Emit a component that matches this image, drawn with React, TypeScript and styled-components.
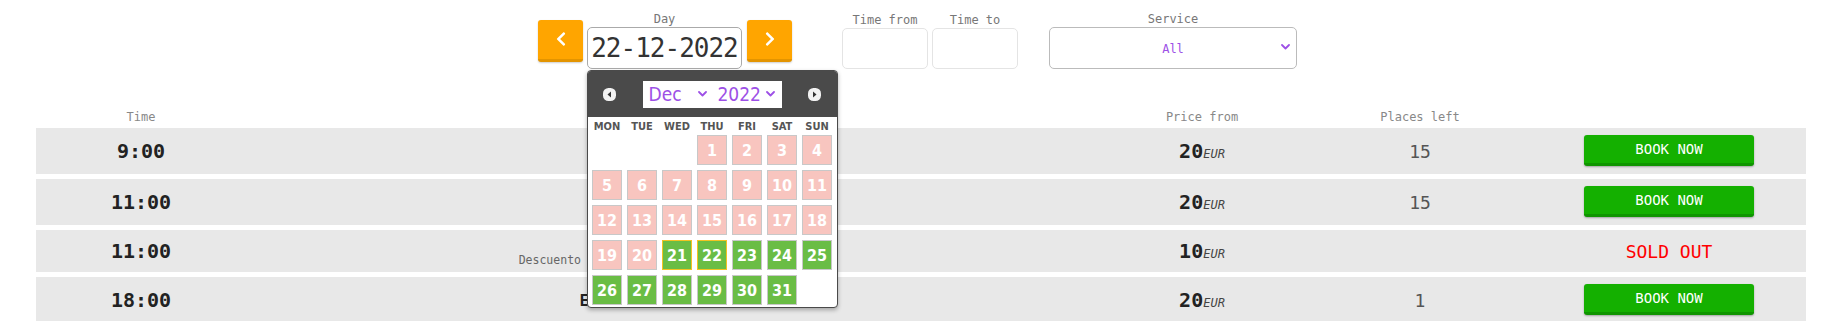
import React from 'react';
import styled, { createGlobalStyle } from 'styled-components';
import { FaChevronLeft, FaChevronRight } from 'react-icons/fa';

const GlobalStyle = createGlobalStyle`
  body {
    margin: 0;
    background: #fff;
    font-family: "DejaVu Sans Mono", "Liberation Mono", monospace;
  }
`;

const slots = [
  { time: '9:00', name: 'Paseo en barco', price: 20, places: '15' },
  { time: '11:00', name: 'Paseo en barco', price: 20, places: '15' },
  {
    time: '11:00',
    name: 'Paseo en barco',
    note: 'Descuento 50% residentes, niños y jubilados.',
    price: 10,
    places: '',
    soldOut: true,
  },
  { time: '18:00', name: 'Excursión en velero', price: 20, places: '1' },
];

const weekdays = ['MON', 'TUE', 'WED', 'THU', 'FRI', 'SAT', 'SUN'];
const days: (number | null)[] = [null, null, null, ...Array.from({ length: 31 }, (_, i) => i + 1)];

const Chevron = ({ color = '#9d50e6' }: { color?: string }) => (
  <svg width="9" height="6" viewBox="0 0 9 6">
    <polyline points="1,1 4.5,4.5 8,1" fill="none" stroke={color} strokeWidth="1.8" strokeLinecap="round" strokeLinejoin="round" />
  </svg>
);

const CalArrow = ({ dir }: { dir: 'left' | 'right' }) => (
  <svg width="13" height="13" viewBox="0 0 13 13">
    <rect x="0" y="0" width="13" height="13" rx="5.5" fill="#f2f2f2" />
    {dir === 'left' ? <polygon points="8,3.5 4.5,6.5 8,9.5" fill="#333" /> : <polygon points="5,3.5 8.5,6.5 5,9.5" fill="#333" />}
  </svg>
);

const App = () => {
  return (
    <Page>
      <GlobalStyle />
      <Toolbar>
        <NavButton style={{ marginRight: 4 }}>
          <FaChevronLeft size={16} />
        </NavButton>
        <Field>
          <Label>Day</Label>
          <DateBox>22-12-2022</DateBox>
          <Calendar>
            <CalHeader>
              <CalArrow dir="left" />
              <MonthBox>
                <MonthPart>
                  Dec <Chevron />
                </MonthPart>
                <YearPart>
                  2022 <Chevron />
                </YearPart>
              </MonthBox>
              <CalArrow dir="right" />
            </CalHeader>
            <WeekRow>
              {weekdays.map((w) => (
                <span key={w}>{w}</span>
              ))}
            </WeekRow>
            <DayGrid>
              {days.map((d, i) =>
                d === null ? (
                  <span key={`e${i}`} />
                ) : (
                  <DayCell key={d} $open={d >= 21} $marked={d === 21 || d === 22}>
                    {d}
                  </DayCell>
                )
              )}
            </DayGrid>
          </Calendar>
        </Field>
        <NavButton style={{ marginLeft: 5 }}>
          <FaChevronRight size={16} />
        </NavButton>
        <Field $gap={50}>
          <Label>Time from</Label>
          <TimeBox />
        </Field>
        <Field $gap={4}>
          <Label>Time to</Label>
          <TimeBox />
        </Field>
        <Field $gap={31}>
          <Label>Service</Label>
          <ServiceBox>
            All
            <SelectChevron>
              <Chevron />
            </SelectChevron>
          </ServiceBox>
        </Field>
      </Toolbar>

      <HeadRow>
        <span>Time</span>
        <span />
        <span>Price from</span>
        <span>Places left</span>
        <span />
      </HeadRow>

      <Rows>
        {slots.map((s, i) => (
          <Row key={i}>
            <TimeCell>{s.time}</TimeCell>
            <ServiceCell>
              <ServiceName>{s.name}</ServiceName>
              {s.note && <ServiceNote>{s.note}</ServiceNote>}
            </ServiceCell>
            <Price>
              {s.price}
              <em>EUR</em>
            </Price>
            <Places>{s.places}</Places>
            {s.soldOut ? <SoldOut>SOLD OUT</SoldOut> : <BookButton>BOOK NOW</BookButton>}
          </Row>
        ))}
      </Rows>
    </Page>
  );
};

const Page = styled.div`
  padding: 12px 32px 0 36px;
`;

const Toolbar = styled.div`
  display: flex;
  justify-content: center;
  align-items: center;
  padding-right: 7px;
`;

const Field = styled.div<{ $gap?: number }>`
  position: relative;
  display: flex;
  flex-direction: column;
  align-items: center;
  margin-left: ${(p) => p.$gap || 0}px;
`;

const Label = styled.div`
  font-size: 12px;
  line-height: 14px;
  color: #777;
  margin-bottom: 1px;
`;

const NavButton = styled.button`
  box-sizing: border-box;
  width: 45px;
  height: 42px;
  padding: 0;
  border: none;
  border-bottom: 3px solid #e39400;
  border-radius: 3px;
  background: #ffa500;
  color: #fff;
  display: flex;
  align-items: center;
  justify-content: center;
  box-shadow: 0 1px 2px rgba(0, 0, 0, 0.2);
`;

const DateBox = styled.div`
  box-sizing: border-box;
  width: 155px;
  height: 42px;
  border: 1px solid #aaa;
  border-radius: 5px;
  display: flex;
  align-items: center;
  justify-content: center;
  font-size: 26px;
  letter-spacing: -1px;
  color: #333;
`;

const TimeBox = styled.div`
  box-sizing: border-box;
  width: 86px;
  height: 41px;
  border: 1px solid #e4e4e4;
  border-radius: 5px;
`;

const ServiceBox = styled.div`
  box-sizing: border-box;
  position: relative;
  width: 248px;
  height: 42px;
  padding-top: 2px;
  border: 1px solid #bbb;
  border-radius: 5px;
  display: flex;
  align-items: center;
  justify-content: center;
  font-size: 12px;
  color: #9d50e6;
`;

const SelectChevron = styled.span`
  position: absolute;
  right: 6px;
  top: 16px;
  display: flex;
`;

const Calendar = styled.div`
  position: absolute;
  top: calc(100% + 1px);
  left: 0;
  z-index: 10;
  box-sizing: border-box;
  width: 251px;
  background: #fff;
  border: 1px solid #4a4a4a;
  border-radius: 4px;
  overflow: hidden;
  box-shadow: 0 2px 4px rgba(0, 0, 0, 0.3);
  font-family: "DejaVu Sans Condensed", "DejaVu Sans", sans-serif;
`;

const CalHeader = styled.div`
  height: 46px;
  background: #4a4a4a;
  display: flex;
  align-items: center;
  justify-content: space-between;
  padding: 0 16px 0 15px;

  svg {
    display: block;
  }
`;

const MonthBox = styled.div`
  width: 139px;
  height: 27px;
  background: #fff;
  display: flex;
  color: #9d50e6;
  font-size: 19px;
`;

const MonthPart = styled.div`
  width: 70px;
  display: flex;
  align-items: center;
  justify-content: space-between;
  padding: 0 6px 0 6px;
  box-sizing: border-box;
`;

const YearPart = styled(MonthPart)`
  width: 69px;
  padding: 0 7px 0 5px;
`;

const WeekRow = styled.div`
  display: grid;
  grid-template-columns: repeat(7, 30px);
  column-gap: 5px;
  padding: 0 4px;
  height: 18px;
  align-items: center;
  justify-items: center;
  font-size: 11px;
  font-weight: bold;
  color: #555;
`;

const DayGrid = styled.div`
  display: grid;
  grid-template-columns: repeat(7, 30px);
  grid-auto-rows: 30px;
  gap: 5px;
  padding: 0 4px 2px;
`;

const DayCell = styled.div<{ $open: boolean; $marked: boolean }>`
  box-sizing: border-box;
  border: 1px solid ${(p) => (p.$marked ? '#f3c322' : '#c8c8c8')};
  background: ${(p) => (p.$open ? '#6abd45' : '#f8c5bf')};
  color: #fff;
  font-size: 16px;
  font-weight: bold;
  display: flex;
  align-items: center;
  justify-content: center;
`;

const columns = '210px 850px 212px 224px 274px';

const HeadRow = styled.div`
  display: grid;
  grid-template-columns: ${columns};
  justify-items: center;
  margin: 41px 0 3px;
  font-size: 12px;
  line-height: 15px;
  color: #888;
`;

const Rows = styled.div`
  display: flex;
  flex-direction: column;
  gap: 5px;
`;

const Row = styled.div`
  display: grid;
  grid-template-columns: ${columns};
  align-items: center;
  justify-items: center;
  padding: 5px 0;
  background: #e8e8e8;
`;

const TimeCell = styled.div`
  font-size: 20px;
  font-weight: bold;
  color: #222;
`;

const ServiceCell = styled.div`
  display: flex;
  flex-direction: column;
  align-items: center;
`;

const ServiceName = styled.div`
  font-size: 16px;
  line-height: 19px;
  font-weight: bold;
  color: #222;
`;

const ServiceNote = styled.div`
  font-size: 11.5px;
  line-height: 13px;
  color: #666;
`;

const Price = styled.div`
  font-size: 20px;
  font-weight: bold;
  color: #222;

  em {
    font-size: 12px;
    font-weight: normal;
    color: #444;
  }
`;

const Places = styled.div`
  font-size: 18px;
  color: #555;
`;

const BookButton = styled.button`
  box-sizing: border-box;
  width: 170px;
  height: 31px;
  margin: 2px 0 3px;
  padding: 0;
  border: none;
  border-bottom: 3px solid #0f9500;
  border-radius: 3px;
  background: #14b000;
  color: #fff;
  font-family: inherit;
  font-size: 14px;
  box-shadow: 0 1px 2px rgba(0, 0, 0, 0.3);
`;

const SoldOut = styled.div`
  font-size: 18px;
  color: #ff0000;
`;

export default App;
